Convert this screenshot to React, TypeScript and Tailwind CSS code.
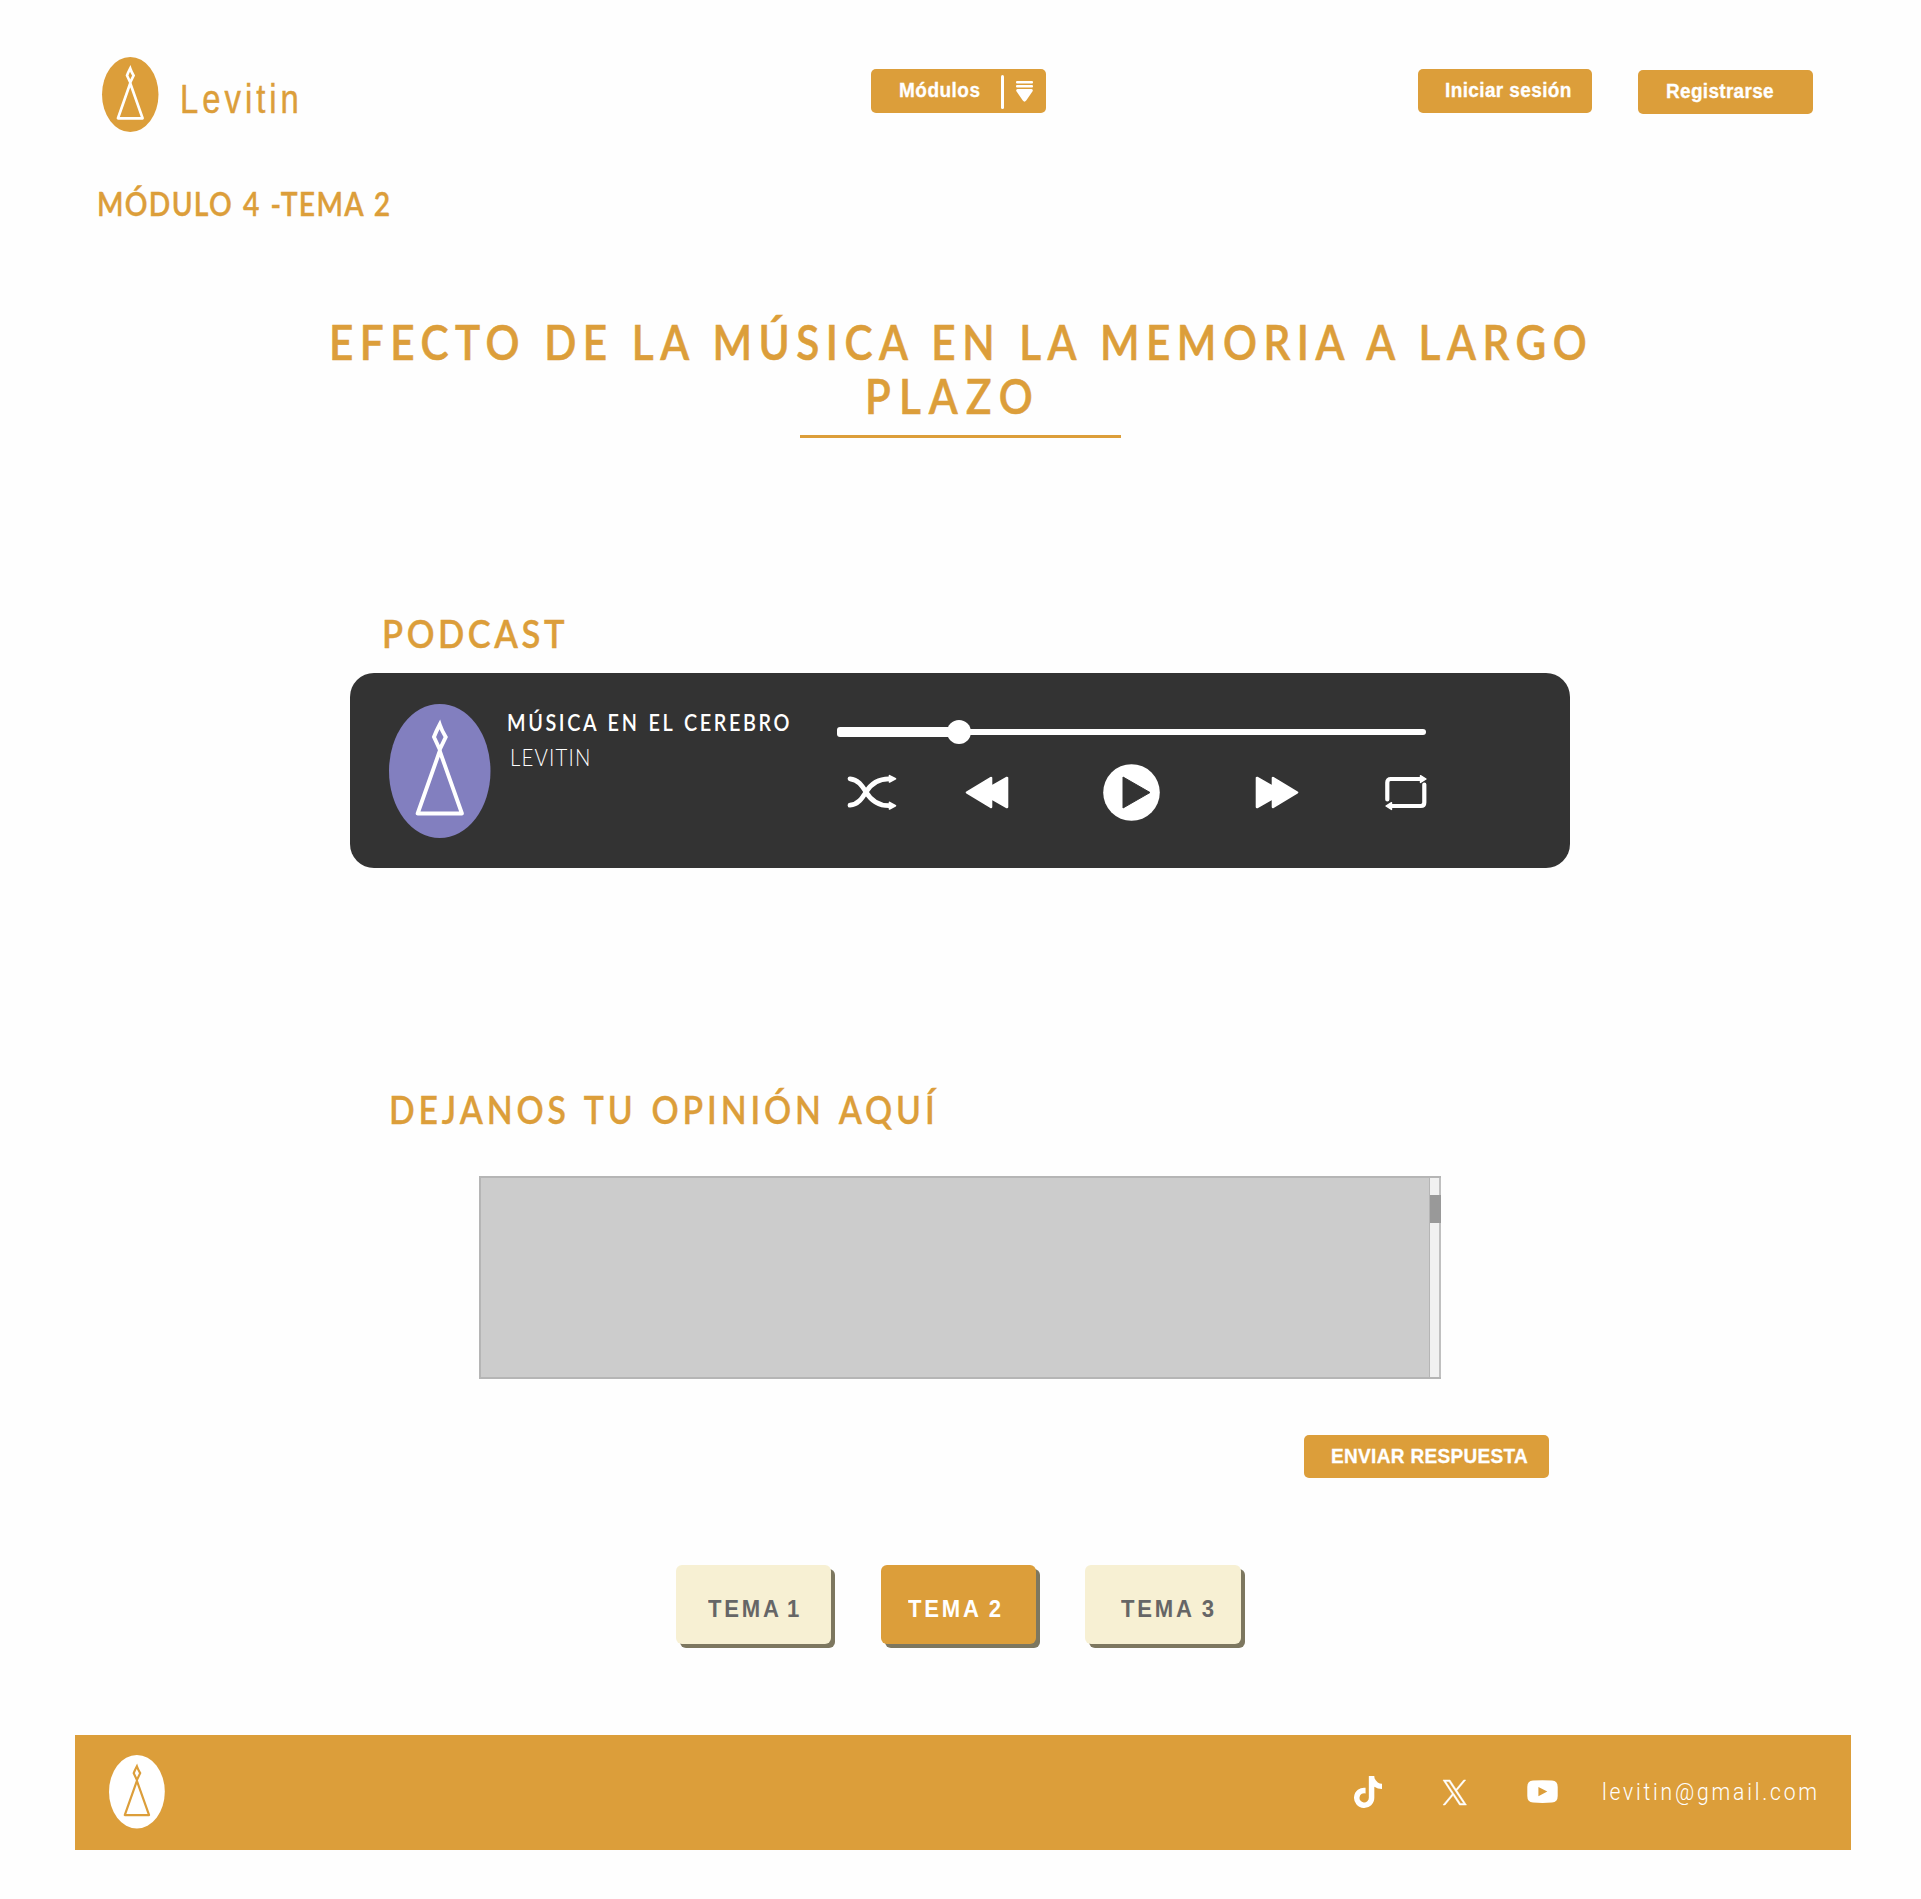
import type { ReactNode } from 'react';
import { FaTiktok } from 'react-icons/fa';

function Logo({ className, bg, line, stroke }: { className: string; bg: string; line: string; stroke: number }) {
  return (
    <svg viewBox="0 0 102 134" preserveAspectRatio="none" className={`overflow-visible ${className}`} aria-label="Levitin">
      <ellipse cx="51" cy="67" rx="51" ry="67" fill={bg} />
      <g fill="none" stroke={line} strokeWidth={stroke} strokeLinejoin="round">
        <path d="M51 20.5 Q53 26.5 57 33 L51 45.5 L45.2 33 Q47 28 51 20.5 Z" strokeLinejoin="miter" />
        <path d="M51 47 L28.8 109.5 H73.3 Z" />
      </g>
    </svg>
  );
}

function Text({ className, children }: { className: string; children: ReactNode }) {
  return <span className={`block origin-left whitespace-nowrap ${className}`}>{children}</span>;
}

function Button({ className, children }: { className: string; children: ReactNode }) {
  return (
    <button
      className={`flex shrink-0 items-start rounded-[5px] bg-[#dc9e3a] text-left font-["Liberation_Sans",Arial,sans-serif] text-white [-webkit-text-stroke:0.3px_#ffffff] ${className}`}
    >
      {children}
    </button>
  );
}

function Header() {
  return (
    <header className="flex h-[140px] items-start pl-[101.5px] pt-[56.5px]">
      <Logo className="h-[75px] w-[56.5px] shrink-0" bg="#dc9e3a" line="#ffffff" stroke={4.8} />
      <Text className='ml-[21.5px] mt-[22.2px] w-[150px] scale-x-80 font-["Liberation_Sans",Arial,sans-serif] text-[41px] leading-none tracking-[5px] text-[#dc9e3a] [-webkit-text-stroke:0.5px_#dc9e3a]'>
        Levitin
      </Text>
      <Button className="ml-[541.5px] mt-[12.5px] h-[43.5px] w-[174.5px] pl-[28px] pt-[11.4px]">
        <Text className="w-[102.3px] scale-x-95 text-xl leading-none font-bold tracking-[0.5px]">Módulos</Text>
        <span className="-mt-[5.4px] h-[34px] w-[2.5px] shrink-0 rounded-full bg-white" />
        <svg viewBox="0 0 17 22" className="ml-[12.5px] mt-[0.6px] h-[22px] w-[17px] shrink-0" fill="#fff">
          <rect x="0" y="0" width="17" height="2.5" rx="1" />
          <rect x="0" y="4" width="17" height="2.5" rx="1" />
          <path d="M1.5 8 H15.5 Q17.6 8.6 16.4 10.6 L10.2 19.5 Q8.5 21.8 6.8 19.5 L0.6 10.6 Q-0.6 8.6 1.5 8 Z" />
        </svg>
      </Button>
      <Button className="ml-[372px] mt-[12.5px] h-[43.5px] w-[174.5px] pl-[27.3px] pt-[11.2px]">
        <Text className="w-[125px] scale-x-95 text-xl leading-none font-bold tracking-[0.4px]">Iniciar sesión</Text>
      </Button>
      <Button className="ml-[46px] mt-[13.5px] h-[43.5px] w-[174.5px] pl-[28.2px] pt-[11.2px]">
        <Text className="w-[110px] scale-x-95 text-xl leading-none font-bold tracking-[0.32px]">Registrarse</Text>
      </Button>
    </header>
  );
}

function Player() {
  return (
    <section className="ml-[350.3px] mt-[21.5px] flex h-[195px] w-[1219.5px] items-start rounded-3xl bg-[#333333] text-white">
      <Logo className="ml-[38.7px] mt-[31px] h-[134px] w-[101.5px] shrink-0" bg="#827fbf" line="#ffffff" stroke={3.9} />
      <div className="ml-[16.5px] mt-[39.3px] w-[300px] shrink-0">
        <Text className="w-[320px] scale-x-90 text-[22px] leading-none font-semibold tracking-[2.9px] [word-spacing:1.8px]">
          MÚSICA EN EL CEREBRO
        </Text>
        <Text className="ml-[2.8px] mt-[11px] w-[120px] scale-x-85 text-2xl leading-none font-light tracking-[1.4px]">
          LEVITIN
        </Text>
      </div>
      <div className="ml-[30px] mt-[47px] w-[590px] shrink-0">
        <div className="flex h-[24.5px] items-center">
          <span className="h-[10px] w-[112px] rounded-l-[3px] bg-white" />
          <span className="-ml-[2px] h-[24.5px] w-[24px] rounded-full bg-white" />
          <span className="-ml-[2px] h-[6px] w-[457.5px] rounded-r-full bg-white" />
        </div>
        <div className="mt-[19.5px] flex items-center">
          <svg viewBox="0 0 50 37" className="ml-[10px] h-[37px] w-[50px]">
            <g fill="none" stroke="#fff" strokeWidth="4.8" strokeLinecap="round">
              <path d="M3 4.8 C11 5.5 15 11.5 19 18 C24 26.5 31 31.7 42 31.7" />
              <path d="M3 31.2 C11 30.5 15 24.5 19 18 C24 9.5 31 4.8 42 4.8" />
            </g>
            <path d="M42.5 1.6 L48.5 4.8 L42.5 8 Z M42.5 28.4 L48.5 31.7 L42.5 35 Z" fill="#fff" stroke="#fff" strokeWidth="1.6" strokeLinejoin="round" />
          </svg>
          <svg viewBox="0 0 44 33" className="ml-[68px] h-[33px] w-[44px]">
            <path d="M2 16.5 L26 2 V10 H28 L42 2 V31 L28 23 H26 V31 Z" fill="#fff" stroke="#fff" strokeWidth="2.6" strokeLinejoin="round" />
          </svg>
          <svg viewBox="0 0 57 57" className="ml-[94.5px] h-[57px] w-[57px]">
            <circle cx="28.5" cy="28.5" r="28.3" fill="#fff" />
            <path d="M20 13 L47 28.5 L20 44 Z" fill="#333" stroke="#333" strokeWidth="1" strokeLinejoin="round" />
          </svg>
          <svg viewBox="0 0 44 33" className="ml-[94.5px] h-[33px] w-[44px]">
            <path d="M42 16.5 L18 2 V10 H16 L2 2 V31 L16 23 H18 V31 Z" fill="#fff" stroke="#fff" strokeWidth="2.6" strokeLinejoin="round" />
          </svg>
          <svg viewBox="0 0 42 37" className="ml-[86px] h-[37px] w-[42px]">
            <g fill="none" stroke="#fff" strokeWidth="4.2" strokeLinecap="round">
              <path d="M2.3 25.5 V8.5 Q2.3 5 5.8 5 H36" />
              <path d="M39.3 10.5 V28.5 Q39.3 32 35.8 32 H6" />
            </g>
            <path d="M35.5 1.6 L41 5 L35.5 8.4 Z M6.5 28.6 L1 32 L6.5 35.4 Z" fill="#fff" stroke="#fff" strokeWidth="1.4" strokeLinejoin="round" />
          </svg>
        </div>
      </div>
    </section>
  );
}

function CommentBox() {
  return (
    <div className="ml-[479px] mt-[47.7px] flex h-[203px] w-[962px] border-2 border-r-0 border-[#b5b5b5] bg-[#cccccc]">
      <div className="flex-1" />
      <div className="flex w-[12.5px] flex-col border-l border-[#b5b5b5]">
        <span className="h-[17px] border-r-2 border-[#c0c0c0] bg-[#f1f1f1]" />
        <span className="h-[28px] bg-[#999999]" />
        <span className="flex-1 border-r-2 border-[#c0c0c0] bg-[#f1f1f1]" />
      </div>
    </div>
  );
}

const temas = [
  { name: 'TEMA 1', box: 'bg-[#f7f0d3] text-[#666666] pl-[32.3px]', text: '[word-spacing:-3px]' },
  { name: 'TEMA 2', box: 'bg-[#dc9e3a] text-white pl-[27.4px]', text: '[word-spacing:-1px]' },
  { name: 'TEMA 3', box: 'bg-[#f7f0d3] text-[#666666] pl-[36px]', text: '[word-spacing:-1px]' },
];

function Footer() {
  return (
    <footer className="ml-[75px] mt-[90.5px] flex h-[115.3px] w-[1776px] items-start bg-[#dc9e3a] text-white">
      <Logo className="ml-[33.5px] mt-[20.8px] h-[73.5px] w-[55.8px] shrink-0" bg="#ffffff" line="#dc9e3a" stroke={4} />
      <FaTiktok className="ml-[1189.8px] mt-[41.5px] h-[32px] w-[28px] shrink-0" />
      <svg viewBox="0 0 1200 1227" preserveAspectRatio="none" fill="currentColor" stroke="currentColor" strokeWidth="25" className="ml-[60.5px] mt-[45px] h-[25px] w-[23.5px] shrink-0 overflow-visible">
        <path d="M714.163 519.284L1160.89 0H1055.03L667.137 450.887L357.328 0H0L468.492 681.821L0 1226.37H105.866L515.491 750.218L842.672 1226.37H1200L714.137 519.284H714.163ZM569.165 687.828L521.697 619.934L144.011 79.6944H306.615L611.412 515.685L658.88 583.579L1055.08 1150.3H892.476L569.165 687.854V687.828Z" />
      </svg>
      <svg viewBox="0 0 31 23" className="ml-[60.9px] mt-[45.8px] h-[23px] w-[31px] shrink-0">
        <path
          fillRule="evenodd"
          fill="#fff"
          d="M6 0.6 Q15.5 -0.3 25 0.6 Q30.7 1 30.7 7 V16 Q30.7 22 25 22.5 Q15.5 23.3 6 22.5 Q0.3 22 0.3 16 V7 Q0.3 1 6 0.6 Z M11.4 7 V16.2 L20.3 11.6 Z"
        />
      </svg>
      <Text className='ml-[43.7px] mt-[44.9px] w-[250px] scale-x-88 font-["Roboto",sans-serif] text-2xl leading-none font-light tracking-[3.15px]'>
        levitin@gmail.com
      </Text>
    </footer>
  );
}

export default function App() {
  return (
    <main className='h-[1899px] w-[1921px] overflow-hidden bg-[#fefefe] font-["Lato",sans-serif]'>
      <Header />
      <Text className="ml-[97.3px] mt-[48.2px] h-[31.5px] w-[360px] scale-x-87 text-[32.5px] leading-none font-semibold tracking-[1.5px] text-[#dc9e3a] [-webkit-text-stroke:0.4px_#dc9e3a] [word-spacing:1.8px]">
        MÓDULO 4 -TEMA 2
      </Text>
      <h1 className="mt-[95.8px] h-[106.5px] text-[48px] leading-[54px] font-semibold text-[#dc9e3a] [-webkit-text-stroke:0.6px_#dc9e3a]">
        <Text className="ml-[328.5px] w-[1460px] scale-x-88 tracking-[7.4px] [word-spacing:1.3px]">
          EFECTO DE LA MÚSICA EN LA MEMORIA A LARGO
        </Text>
        <Text className="ml-[865px] w-[220px] scale-x-88 tracking-[9.2px]">PLAZO</Text>
      </h1>
      <hr className="ml-[799.5px] mt-[13px] h-[3px] w-[321px] border-0 bg-[#dc9e3a]" />
      <Text className="ml-[381.6px] mt-[176.9px] h-[36.6px] w-[220px] scale-x-92 text-[37.5px] leading-none font-semibold tracking-[3.9px] text-[#dc9e3a] [-webkit-text-stroke:0.4px_#dc9e3a]">
        PODCAST
      </Text>
      <Player />
      <Text className="ml-[389px] mt-[223.4px] h-[37.2px] w-[640px] scale-x-90 text-[37.5px] leading-none font-semibold tracking-[4.3px] text-[#dc9e3a] [-webkit-text-stroke:0.3px_#dc9e3a] [word-spacing:3px]">
        DEJANOS TU OPINIÓN AQUÍ
      </Text>
      <CommentBox />
      <Button className="ml-[1304px] mt-[56px] h-[43.2px] w-[244.5px] pl-[27px] pt-[10.8px]">
        <Text className="w-[208px] scale-x-95 text-xl leading-none font-bold tracking-[0.35px]">ENVIAR RESPUESTA</Text>
      </Button>
      <nav className="ml-[675.7px] mt-[86.2px] flex gap-[49.4px]">
        {temas.map((t) => (
          <button
            key={t.name}
            className={`flex h-[79.5px] w-[155.5px] items-start rounded-[6px] pt-[32.3px] text-left font-["Liberation_Sans",Arial,sans-serif] text-2xl leading-none font-bold shadow-[4px_4px_0_#7d775f] ${t.box}`}
          >
            <Text className={`w-[110px] scale-x-92 tracking-[3px] ${t.text}`}>{t.name}</Text>
          </button>
        ))}
      </nav>
      <Footer />
    </main>
  );
}
